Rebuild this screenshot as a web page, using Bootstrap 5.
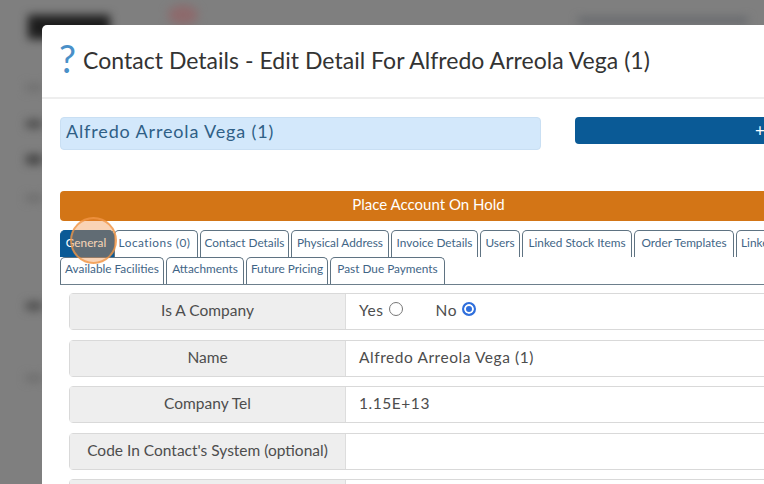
<!DOCTYPE html>
<html lang="en">
<head>
    <title>Contact Details</title>
    <meta charset="utf-8">
    <meta name="viewport" content="width=device-width, initial-scale=1">
    <link href="https://cdn.jsdelivr.net/npm/bootstrap@5.3.0/dist/css/bootstrap.min.css" rel="stylesheet">
    <style>
        html, body { height: 100%; overflow: hidden; }
        body { background: #7f7f7f; font-family: Lato, "Liberation Sans", sans-serif; color: #444; font-size: 15px; }
        .page-blur { position: absolute; background: #333; filter: blur(5px); }
        .page-blur.logo { left: 28px; top: 15px; width: 82px; height: 24px; background: #1d1d1d; }
        .page-blur.mark-red { left: 168px; top: 5px; width: 30px; height: 20px; background: #8d6a6c; border-radius: 50%; }
        .page-blur.top-links { left: 578px; top: 18px; width: 170px; height: 5px; background: #5c6066; }
        .page-blur.side-a { left: 26px; top: 84px; width: 16px; height: 7px; background: #6e6e6e; }
        .page-blur.side-b { left: 26px; top: 120px; width: 16px; height: 8px; background: #4a4a4a; }
        .page-blur.side-c { left: 26px; top: 155px; width: 16px; height: 9px; background: #3f3f3f; }
        .page-blur.side-d { left: 26px; top: 195px; width: 16px; height: 6px; background: #6a6a6a; }
        .page-blur.side-e { left: 26px; top: 302px; width: 16px; height: 8px; background: #4a4a4a; }
        .page-blur.side-f { left: 26px; top: 375px; width: 16px; height: 6px; background: #6a6a6a; }
        .dialog-box { position: absolute; left: 42px; top: 25px; width: 900px; min-height: 600px; background: #fff; border-radius: 5px 0 0 0; }
        .dialog-head { height: 74px; padding-left: 17px; border-bottom: 2px solid #eee; }
        .help-mark { color: #4a90c8; font-size: 38px; line-height: 1; margin-right: 6px; width: 18px; margin-top: -6px; }
        .dialog-title { font-size: 23px; color: #333; white-space: nowrap; letter-spacing: .03px; margin-top: -2px; }
        .dialog-body { padding: 18px 18px 0; }
        .contact-name { flex: 0 0 481px; height: 33px; background: #d3e8fb; border: 1px solid #c9dff3; border-radius: 4px; color: #2f5f86; font-size: 18px; letter-spacing: .85px; padding-left: 5px; line-height: 27px; }
        .add-btn { flex: 0 0 370px; margin-left: 34px; height: 27px; background: #0a5a96; color: #fff; border-radius: 4px; line-height: 27px; padding: 0; text-align: center; font-size: 17px; border: 0; }
        .add-btn:hover { background: #0a5a96; color: #fff; }
        .hold-btn { margin-top: 41px; width: 737px; height: 30px; padding: 0 0 4px; background: #d37516; border: 0; border-radius: 4px; color: #fff; font-size: 15px; line-height: 26px; }
        .tab-rows { margin-top: 9px; border-bottom: 1px solid #6d7f8c; width: 860px; position: relative; }
        .tab-line { height: 27px; }
        .tab-item { height: 27px; margin-right: 2px; border: 1px solid #5f7382; border-bottom: 0; border-radius: 5px 5px 0 0; color: #3f6586; font-size: 11.8px; line-height: 24px; white-space: nowrap; background: #fff; text-align: center; overflow: hidden; }
        .tab-line.is-lower .tab-item { line-height: 22px; }
        .tab-item.is-active { background: #0a5a96; color: #fff; border-color: #0a5a96; margin-right: 0; padding-right: 2px; }
        .tab-w54 { width: 54px; } .tab-w84 { width: 84px; letter-spacing: .5px; padding-right: 3px; } .tab-w89 { width: 89px; } .tab-w98 { width: 98px; }
        .tab-w87 { width: 87px; } .tab-w40 { width: 40px; } .tab-w110 { width: 110px; } .tab-w100 { width: 100px; } .tab-w104 { width: 104px; }
        .tab-w78 { width: 78px; } .tab-w82 { width: 82px; } .tab-w115 { width: 115px; }
        .tab-clip { padding-left: 4px; text-align: left; width: 60px; }
        .click-ring { position: absolute; left: -1px; top: -13px; width: 47px; height: 47px; border-radius: 50%; background: rgba(240, 140, 60, .38); border: 2px solid rgba(240, 150, 70, .75); margin-left: 11px; pointer-events: none; }
        .field-list { margin: 8px 0 0 9px; width: 728px; }
        .field-row { height: 37px; margin-bottom: 9.5px; border: 1px solid #d9d9d9; border-radius: 4px; }
        .field-name { width: 276px; background: #eee; color: #4d4d4d; font-size: 15.5px; text-align: center; border-right: 1px solid #ddd; padding-bottom: 1px; }
        .field-value { padding-left: 13px; font-size: 15.5px; color: #4d4d4d; letter-spacing: .55px; padding-bottom: 1px; }
        .radio-dot { width: 14px; height: 14px; border-radius: 50%; border: 1px solid #777; display: inline-block; margin: 0 0 6px 5px; vertical-align: middle; }
        .radio-dot.is-on { border: 2px solid #2f6fdc; background: #2f6fdc; box-shadow: inset 0 0 0 2px #fff; }
        .radio-gap { margin-left: 33px; }
    </style>
    <script src="https://cdn.jsdelivr.net/npm/bootstrap@5.3.0/dist/js/bootstrap.bundle.min.js"></script>
</head>
<body>
<div class="page-blur logo"></div>
<div class="page-blur mark-red"></div>
<div class="page-blur top-links"></div>
<div class="page-blur side-a"></div>
<div class="page-blur side-b"></div>
<div class="page-blur side-c"></div>
<div class="page-blur side-d"></div>
<div class="page-blur side-e"></div>
<div class="page-blur side-f"></div>

<div class="dialog-box">
    <div class="dialog-head d-flex align-items-center">
        <span class="help-mark">?</span>
        <span class="dialog-title">Contact Details - Edit Detail For Alfredo Arreola Vega (1)</span>
    </div>
    <div class="dialog-body">
        <div class="d-flex align-items-start">
            <div class="contact-name">Alfredo Arreola Vega (1)</div>
            <button type="button" class="btn add-btn">+</button>
        </div>
        <button type="button" class="btn hold-btn d-block text-center">Place Account On Hold</button>
        <div class="tab-rows">
            <div class="tab-line d-flex">
                <div class="tab-item tab-w54 is-active">General</div>
                <div class="tab-item tab-w84">Locations (0)</div>
                <div class="tab-item tab-w89">Contact Details</div>
                <div class="tab-item tab-w98">Physical Address</div>
                <div class="tab-item tab-w87">Invoice Details</div>
                <div class="tab-item tab-w40">Users</div>
                <div class="tab-item tab-w110">Linked Stock Items</div>
                <div class="tab-item tab-w100">Order Templates</div>
                <div class="tab-item tab-clip">Linked Items</div>
            </div>
            <div class="tab-line is-lower d-flex">
                <div class="tab-item tab-w104">Available Facilities</div>
                <div class="tab-item tab-w78">Attachments</div>
                <div class="tab-item tab-w82">Future Pricing</div>
                <div class="tab-item tab-w115">Past Due Payments</div>
            </div>
            <div class="click-ring"></div>
        </div>
        <div class="field-list">
            <div class="field-row d-flex">
                <div class="field-name d-flex align-items-center justify-content-center">Is A Company</div>
                <div class="field-value d-flex align-items-center">
                    <span>Yes<span class="radio-dot"></span></span>
                    <span class="radio-gap">No<span class="radio-dot is-on"></span></span>
                </div>
            </div>
            <div class="field-row d-flex">
                <div class="field-name d-flex align-items-center justify-content-center">Name</div>
                <div class="field-value d-flex align-items-center">Alfredo Arreola Vega (1)</div>
            </div>
            <div class="field-row d-flex">
                <div class="field-name d-flex align-items-center justify-content-center">Company Tel</div>
                <div class="field-value d-flex align-items-center">1.15E+13</div>
            </div>
            <div class="field-row d-flex">
                <div class="field-name d-flex align-items-center justify-content-center">Code In Contact's System (optional)</div>
                <div class="field-value d-flex align-items-center"></div>
            </div>
            <div class="field-row d-flex">
                <div class="field-name"></div>
                <div class="field-value"></div>
            </div>
        </div>
    </div>
</div>
</body>
</html>
